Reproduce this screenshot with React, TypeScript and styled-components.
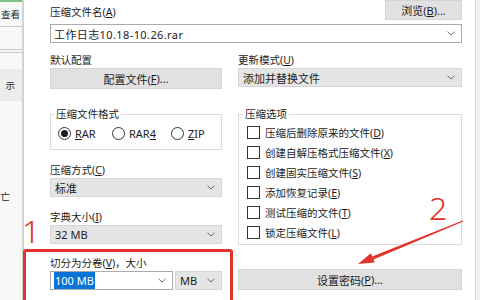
import React from 'react';
import styled, { createGlobalStyle } from 'styled-components';

const GlobalStyles = createGlobalStyle`
  html, body {
    margin: 0;
    padding: 0;
    background: #ffffff;
  }
  body {
    font-family: "Noto Sans", "Noto Sans CJK SC", sans-serif;
    color: #1c1c1c;
  }
`;

const RED = '#e2322a';

const Screen = styled.div`
  position: relative;
  display: flex;
  width: 480px;
  height: 300px;
  overflow: hidden;
  font-size: 10.5px;
`;

/* left window behind the dialog */
const SideStrip = styled.div`
  width: 22px;
  flex: none;
  display: flex;
  flex-direction: column;
  background: #f8f8f8;
  border-right: 2px solid #d2d2d2;
  overflow: hidden;
`;

const SideItem = styled.div<{ $h: number; $bg?: string; $line?: boolean; $top?: string; $pr?: number }>`
  height: ${p => p.$h}px;
  flex: none;
  display: flex;
  align-items: center;
  justify-content: flex-end;
  padding-right: ${p => p.$pr ?? 2}px;
  white-space: nowrap;
  font-size: 9.5px;
  background: ${p => p.$bg || 'transparent'};
  border-top: ${p => (p.$top ? `2px solid ${p.$top}` : 'none')};
  border-bottom: ${p => (p.$line ? '1px solid #c9c9c9' : 'none')};
`;

const RightStrip = styled.div`
  width: 4px;
  flex: none;
  background: #f0f0f0;
  border-left: 1px solid #d9d9d9;
`;

const Dialog = styled.div`
  flex: 1;
  display: flex;
  flex-direction: column;
  background: #ffffff;
  padding: 0 13px 0 26px;
`;

const TopRow = styled.div`
  height: 20px;
  display: flex;
  justify-content: space-between;
  align-items: center;
`;

const Label = styled.div<{ $pad?: number }>`
  line-height: 12px;
  height: 12px;
  padding-top: ${p => p.$pad || 0}px;
  white-space: nowrap;
`;

const Key = styled.span`
  text-decoration: underline;
  text-underline-offset: 1px;
`;

const Button = styled.div<{ $w?: number; $h?: number }>`
  width: ${p => (p.$w ? `${p.$w}px` : 'auto')};
  height: ${p => p.$h || 21}px;
  box-sizing: border-box;
  display: flex;
  align-items: center;
  justify-content: center;
  background: #e1e1e1;
  border: 1px solid #d4d4d4;
  font-size: 11px;
  white-space: nowrap;
`;

const TextBox = styled.div<{ $w?: number }>`
  width: ${p => (p.$w ? `${p.$w}px` : 'auto')};
  height: 19px;
  box-sizing: border-box;
  display: flex;
  align-items: center;
  justify-content: space-between;
  padding: 0 6px 0 3px;
  background: #ffffff;
  border: 1px solid #aaaaaa;
  font-size: 11px;
  white-space: nowrap;
`;

const FileName = styled.span`
  letter-spacing: 0.4px;
`;

const Select = styled.div<{ $grow?: boolean }>`
  flex: ${p => (p.$grow ? 1 : 'none')};
  height: 19px;
  box-sizing: border-box;
  display: flex;
  align-items: center;
  justify-content: space-between;
  padding: 0 6px 0 4px;
  background: #e5e5e5;
  border: 1px solid #d6d6d6;
  font-size: 11px;
  white-space: nowrap;
`;

const Highlight = styled.span`
  background: #0a74d6;
  color: #ffffff;
  padding: 1px 1px;
`;

const Columns = styled.div<{ $top: number }>`
  display: grid;
  grid-template-columns: 172px 224px;
  column-gap: 16px;
  margin-top: ${p => p.$top}px;
`;

const Field = styled.div<{ $top?: number }>`
  display: flex;
  flex-direction: column;
  gap: 2px;
  margin-top: ${p => p.$top || 0}px;
`;

const Stack = styled.div`
  display: flex;
  flex-direction: column;
`;

const Group = styled.fieldset<{ $pad: string }>`
  margin: 0;
  min-width: 0;
  padding: ${p => p.$pad};
  border: 1px solid #dcdcdc;
`;

const Legend = styled.legend`
  margin-left: -4px;
  padding: 0 2px;
  line-height: 12px;
  font-size: 10.5px;
`;

const RadioRow = styled.div`
  display: grid;
  grid-template-columns: 54px 59px 1fr;
  height: 13px;
`;

const Option = styled.div`
  display: flex;
  align-items: center;
  gap: 4px;
  font-size: 11px;
  white-space: nowrap;
`;

const Radio = styled.span<{ $on?: boolean }>`
  width: 13px;
  height: 13px;
  box-sizing: border-box;
  border: 1px solid #333333;
  border-radius: 50%;
  display: flex;
  align-items: center;
  justify-content: center;
  &::after {
    content: '';
    width: 7px;
    height: 7px;
    border-radius: 50%;
    background: ${p => (p.$on ? '#1c1c1c' : 'transparent')};
  }
`;

const CheckRow = styled.div`
  height: 20px;
  display: flex;
  align-items: center;
  gap: 5px;
  font-size: 10.5px;
  white-space: nowrap;
`;

const CheckBox = styled.span`
  width: 13px;
  height: 13px;
  box-sizing: border-box;
  border: 1px solid #333333;
  background: #ffffff;
  flex: none;
`;

const SizeRow = styled.div`
  display: flex;
  gap: 2px;
`;

const BottomButton = styled(Button)`
  align-self: end;
`;

/* red annotations drawn over the screenshot */
const RedFrame = styled.div`
  position: absolute;
  left: 23px;
  top: 249px;
  width: 210px;
  height: 70px;
  box-sizing: border-box;
  border: 3px solid ${RED};
  border-radius: 3px;
  pointer-events: none;
`;

const RedNumber = styled.div<{ $x: number; $y: number }>`
  position: absolute;
  left: ${p => p.$x}px;
  top: ${p => p.$y}px;
  font-family: "Noto Sans", sans-serif;
  font-weight: 300;
  font-size: 32px;
  line-height: 1;
  color: ${RED};
  pointer-events: none;
`;

const ArrowLayer = styled.svg`
  position: absolute;
  left: 0;
  top: 0;
  pointer-events: none;
`;

const Chevron = () => (
  <svg width="8" height="5" viewBox="0 0 8 5">
    <path d="M0.5 0.8 L4 4 L7.5 0.8" fill="none" stroke="#6a6a6a" strokeWidth="1" />
  </svg>
);

const options: [string, string][] = [
  ['压缩后删除原来的文件', 'D'],
  ['创建自解压格式压缩文件', 'X'],
  ['创建固实压缩文件', 'S'],
  ['添加恢复记录', 'E'],
  ['测试压缩的文件', 'T'],
  ['锁定压缩文件', 'L'],
];

function App() {
  return (
    <>
      <GlobalStyles />
      <Screen>
        <SideStrip>
          <SideItem $h={24} $line $top="#7cc08a">查看</SideItem>
          <SideItem $h={22} $line />
          <SideItem $h={2} $line />
          <SideItem $h={16} />
          <SideItem $h={32} $bg="#ececec" $pr={7}>示</SideItem>
          <SideItem $h={88} />
          <SideItem $h={14} $pr={12}>亡</SideItem>
        </SideStrip>

        <Dialog>
          <TopRow>
            <Label $pad={4}>压缩文件名(<Key>A</Key>)</Label>
            <Button $w={77} $h={20}>浏览(<Key>B</Key>)...</Button>
          </TopRow>
          <TextBox style={{ marginTop: 4 }}>
            <FileName>工作日志10.18-10.26.rar</FileName>
            <Chevron />
          </TextBox>

          <Columns $top={11}>
            <Field>
              <Label>默认配置</Label>
              <Button>配置文件(<Key>F</Key>)...</Button>
            </Field>
            <Field>
              <Label>更新模式(<Key>U</Key>)</Label>
              <Select>
                <span>添加并替换文件</span>
                <Chevron />
              </Select>
            </Field>
          </Columns>

          <Columns $top={19}>
            <Stack>
              <Group $pad="6px 7px 10px">
                <Legend>压缩文件格式</Legend>
                <RadioRow>
                  <Option><Radio $on /><span><Key>R</Key>AR</span></Option>
                  <Option><Radio /><span>RAR<Key>4</Key></span></Option>
                  <Option><Radio /><span><Key>Z</Key>IP</span></Option>
                </RadioRow>
              </Group>
              <Field $top={14}>
                <Label>压缩方式(<Key>C</Key>)</Label>
                <Select>
                  <span>标准</span>
                  <Chevron />
                </Select>
              </Field>
              <Field $top={14}>
                <Label>字典大小(<Key>I</Key>)</Label>
                <Select>
                  <span>32 MB</span>
                  <Chevron />
                </Select>
              </Field>
            </Stack>
            <Group $pad="2px 8px 2px">
              <Legend>压缩选项</Legend>
              {options.map(([text, key]) => (
                <CheckRow key={key}>
                  <CheckBox />
                  <span>{text}(<Key>{key}</Key>)</span>
                </CheckRow>
              ))}
            </Group>
          </Columns>

          <Columns $top={12}>
            <Field>
              <Label>切分为分卷(<Key>V</Key>)，大小</Label>
              <SizeRow>
                <TextBox $w={123}>
                  <Highlight>100 MB</Highlight>
                  <Chevron />
                </TextBox>
                <Select $grow>
                  <span>MB</span>
                  <Chevron />
                </Select>
              </SizeRow>
            </Field>
            <BottomButton>设置密码(<Key>P</Key>)...</BottomButton>
          </Columns>
        </Dialog>

        <RightStrip />

        <RedFrame />
        <RedNumber $x={22} $y={215}>1</RedNumber>
        <RedNumber $x={429} $y={192}>2</RedNumber>
        <ArrowLayer width="480" height="300" viewBox="0 0 480 300">
          <polygon points="463.3,221.6 373.4,259.4 372.2,256.4 462.7,220.4" fill={RED} />
          <polygon points="358,264 374.7,262.5 370.9,253.3" fill={RED} />
        </ArrowLayer>
      </Screen>
    </>
  );
}

export default App;
